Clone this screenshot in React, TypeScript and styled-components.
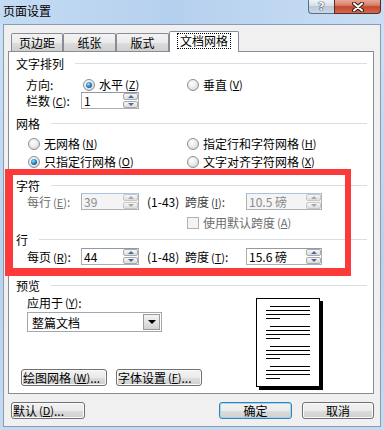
import styled, { createGlobalStyle } from "styled-components";
import { FC, ReactNode } from "react";

const GlobalStyle = createGlobalStyle`
  html, body { margin: 0; padding: 0; }
  body {
    font-family: "Noto Sans CJK SC", "Noto Sans", sans-serif;
    font-size: 12px;
    color: #000;
  }
  u { text-underline-offset: 1px; }
`;

const Window = styled.div`
  position: relative;
  width: 384px;
  height: 430px;
  display: flex;
  flex-direction: column;
  background: linear-gradient(180deg, #cfe2f6 0%, #b9d2ed 60%, #c4daf1 100%);
  overflow: hidden;
`;

const TitleBar = styled.div`
  height: 24px;
  flex-shrink: 0;
  display: flex;
  justify-content: space-between;
  align-items: flex-start;
  background: linear-gradient(90deg, #c4dbf3 0%, #b5d0ee 45%, #c9def4 100%);
`;

const Title = styled.div`
  padding: 4px 0 0 3px;
  line-height: 13px;
`;

const Caption = styled.div`
  display: flex;
  margin-right: 3px;
`;

const HelpButton = styled.div`
  width: 26px;
  height: 14px;
  box-sizing: border-box;
  border: 1px solid #5d6d82;
  border-top: none;
  border-right: none;
  border-radius: 0 0 0 4px;
  background: linear-gradient(180deg, #eef3f9 0%, #d5dfea 45%, #b9c8da 50%, #cbd7e5 100%);
  display: flex;
  align-items: center;
  justify-content: center;
  color: #fff;
  font: bold 11px "DejaVu Sans", sans-serif;
  text-shadow: 0 0 1px #26374d, 0 0 1px #26374d, 0 0 1px #26374d;
`;

const CloseButton = styled.div`
  width: 47px;
  height: 14px;
  box-sizing: border-box;
  border: 1px solid #5a2a22;
  border-top: none;
  border-radius: 0 0 4px 0;
  background: linear-gradient(180deg, #e8a797 0%, #d8806b 40%, #c5472f 52%, #d06a52 100%);
  display: flex;
  align-items: center;
  justify-content: center;
`;

const Client = styled.div`
  flex: 1;
  margin: 0 3px 3px 3px;
  background: #f0f0f0;
  border: 1px solid #8a9bb1;
  display: flex;
  flex-direction: column;
`;

const TabRow = styled.div`
  position: relative;
  z-index: 2;
  display: flex;
  align-items: flex-end;
  height: 20px;
  margin-top: 6px;
  padding-left: 7px;
`;

const Tab = styled.div<{ $w: number; $active?: boolean }>`
  width: ${p => p.$w}px;
  height: ${p => (p.$active ? 21 : 18)}px;
  margin-bottom: ${p => (p.$active ? -1 : 0)}px;
  box-sizing: border-box;
  border: 1px solid #898c95;
  border-bottom: none;
  border-radius: 2px 2px 0 0;
  background: ${p =>
    p.$active ? "#fff" : "linear-gradient(180deg, #f3f3f3 0%, #ebebeb 50%, #dddddd 51%, #cfcfcf 100%)"};
  display: flex;
  align-items: center;
  justify-content: center;
  padding-bottom: ${p => (p.$active ? 2 : 0)}px;
`;

const FocusText = styled.span`
  outline: 1px dotted #000;
  padding: 0 2px;
  line-height: 14px;
`;

const Panel = styled.div`
  position: relative;
  margin-left: 4px;
  width: 366px;
  height: 343px;
  box-sizing: border-box;
  border: 1px solid #898c95;
  background: #fff;
  display: flex;
  flex-direction: column;
  padding-top: 3px;
  overflow: hidden;
`;

const Row = styled.div<{ $mt?: number; $indent?: number }>`
  display: flex;
  align-items: center;
  height: 17px;
  line-height: 17px;
  flex-shrink: 0;
  margin-top: ${p => p.$mt ?? 0}px;
  padding-left: ${p => p.$indent ?? 0}px;
  white-space: nowrap;
`;

const GroupHeader = styled(Row)`
  padding-left: 7px;
  padding-right: 6px;
  gap: 11px;
  &::after {
    content: "";
    flex: 1;
    height: 1px;
    background: #d5dfe5;
  }
`;

const Key = styled.span`
  margin-left: 2px;
  font-size: 11px;
`;

const Label = styled.span<{ $w?: number; $disabled?: boolean; $dim?: boolean }>`
  display: inline-block;
  width: ${p => (p.$w ? `${p.$w}px` : "auto")};
  flex-shrink: 0;
  color: ${p => (p.$disabled ? "#6d6d6d" : p.$dim ? "#3c3c3c" : "#000")};
`;

const Option = styled.span<{ $w?: number; $disabled?: boolean }>`
  display: flex;
  align-items: center;
  width: ${p => (p.$w ? `${p.$w}px` : "auto")};
  flex-shrink: 0;
  color: ${p => (p.$disabled ? "#6d6d6d" : "#000")};
`;

const RadioDot = styled.span<{ $checked?: boolean }>`
  width: 12px;
  height: 12px;
  box-sizing: border-box;
  border-radius: 50%;
  border: 1px solid #8f8f8f;
  background: radial-gradient(circle at 40% 35%, #ffffff 0%, #ececec 45%, #c9c9c9 100%);
  display: inline-flex;
  align-items: center;
  justify-content: center;
  margin-right: 4px;
  &::after {
    content: "";
    display: ${p => (p.$checked ? "block" : "none")};
    width: 6px;
    height: 6px;
    border-radius: 50%;
    background: radial-gradient(circle at 40% 35%, #9fe0ff 0%, #2a86c9 45%, #0b3a6a 100%);
  }
`;

const CheckBox = styled.span`
  width: 12px;
  height: 12px;
  box-sizing: border-box;
  border: 1px solid #b1b1b1;
  background: #f4f4f4;
  margin-right: 4px;
`;

const SpinBox = styled.div<{ $w: number; $disabled?: boolean }>`
  width: ${p => p.$w}px;
  height: 17px;
  box-sizing: border-box;
  border: 1px solid ${p => (p.$disabled ? "#adb2b5" : "#abadb3")};
  border-top-color: ${p => (p.$disabled ? "#a9c3e3" : "#8e9aa8")};
  background: ${p => (p.$disabled ? "#f4f4f4" : "#fff")};
  display: flex;
  flex-shrink: 0;
`;

const SpinText = styled.span<{ $disabled?: boolean }>`
  flex: 1;
  padding-left: 2px;
  line-height: 15px;
  color: ${p => (p.$disabled ? "#8a8a8a" : "#000")};
`;

const SpinButtons = styled.div`
  width: 15px;
  display: flex;
  flex-direction: column;
  gap: 1px;
`;

const SpinHalf = styled.div<{ $down?: boolean; $disabled?: boolean }>`
  flex: 1;
  box-sizing: border-box;
  border: 1px solid ${p => (p.$disabled ? "#c8c8c8" : "#a9a9a9")};
  border-radius: 2px;
  background: linear-gradient(180deg, #f7f7f7, #dcdcdc);
  display: flex;
  align-items: center;
  justify-content: center;
  &::after {
    content: "";
    border-left: 3px solid transparent;
    border-right: 3px solid transparent;
    ${p => (p.$down ? "border-top" : "border-bottom")}: 3px solid ${p => (p.$disabled ? "#a8a8a8" : "#4a6aa3")};
  }
`;

const Range = styled.span`
  width: 38px;
  margin-left: 8px;
  flex-shrink: 0;
`;

const Select = styled.div`
  width: 135px;
  height: 20px;
  box-sizing: border-box;
  margin-left: 6px;
  margin-top: 1px;
  border: 1px solid #a4a7ad;
  background: #fff;
  display: flex;
  align-items: center;
  padding: 0 1px 0 4px;
`;

const SelectText = styled.span`
  flex: 1;
`;

const DropButton = styled.div`
  width: 17px;
  height: 16px;
  box-sizing: border-box;
  border: 1px solid #9a9a9a;
  background: linear-gradient(180deg, #f4f4f4, #d2d2d2);
  display: flex;
  align-items: center;
  justify-content: center;
  &::after {
    content: "";
    border-left: 4px solid transparent;
    border-right: 4px solid transparent;
    border-top: 4px solid #000;
  }
`;

const PreviewBody = styled.div`
  display: flex;
`;

const PreviewLeft = styled.div`
  width: 247px;
  padding-left: 12px;
  box-sizing: border-box;
  display: flex;
  flex-direction: column;
`;

const PageSvg = styled.svg`
  margin-top: 4px;
  flex-shrink: 0;
`;

const ButtonRow = styled.div<{ $mt?: number }>`
  display: flex;
  gap: 9px;
  margin-top: ${p => p.$mt ?? 0}px;
`;

const Button = styled.div<{ $w: number; $default?: boolean; $center?: boolean }>`
  width: ${p => p.$w}px;
  height: 17px;
  box-sizing: border-box;
  border: 1px solid ${p => (p.$default ? "#3c7fb1" : "#707070")};
  border-radius: 3px;
  background: linear-gradient(180deg, #f2f2f2 0%, #ebebeb 50%, #dddddd 51%, #cfcfcf 100%);
  box-shadow: inset 0 0 0 1px ${p => (p.$default ? "#9ad8f5" : "#fbfbfb")};
  display: flex;
  align-items: center;
  justify-content: ${p => (p.$center ? "center" : "flex-start")};
  padding-left: ${p => (p.$center ? 0 : 1)}px;
  line-height: 15px;
  white-space: nowrap;
  flex-shrink: 0;
`;

const Footer = styled.div`
  display: flex;
  padding: 8px 6px 0 7px;
`;

const FooterRight = styled.div`
  display: flex;
  gap: 10px;
  margin-left: auto;
`;

// red annotation box drawn over the dialog
const Highlight = styled.div`
  position: absolute;
  left: 5px;
  top: 169px;
  width: 346px;
  height: 107px;
  box-sizing: border-box;
  border: solid #fc3a3a;
  border-width: 6px 6px 8px 8px;
  pointer-events: none;
`;

const Spinner: FC<{ w: number; value: string; disabled?: boolean }> = ({ w, value, disabled }) => (
  <SpinBox $w={w} $disabled={disabled}>
    <SpinText $disabled={disabled}>{value}</SpinText>
    <SpinButtons>
      <SpinHalf $disabled={disabled} />
      <SpinHalf $down $disabled={disabled} />
    </SpinButtons>
  </SpinBox>
);

const Radio: FC<{ w?: number; checked?: boolean; children: ReactNode }> = ({ w, checked, children }) => (
  <Option $w={w}>
    <RadioDot $checked={checked} />
    {children}
  </Option>
);

const Mn: FC<{ k: string }> = ({ k }) => (
  <Key>
    (<u>{k}</u>)
  </Key>
);

const PreviewPage = () => {
  const paragraphs = [8, 28, 48, 68];
  return (
    <PageSvg width="68" height="93" viewBox="0 0 68 93">
      <rect x="3" y="3" width="64" height="89" fill="#000" />
      <rect x="0.5" y="0.5" width="63" height="88" fill="#fff" stroke="#000" />
      {paragraphs.map(y => (
        <g key={y} fill="#000">
          <rect x="14" y={y} width="40" height="1" />
          <rect x="10" y={y + 4} width="44" height="1" />
          <rect x="10" y={y + 8} width="44" height="1" />
          <rect x="10" y={y + 12} width="14" height="1" />
        </g>
      ))}
    </PageSvg>
  );
};

const App = () => (
  <>
    <GlobalStyle />
    <Window>
      <TitleBar>
        <Title>页面设置</Title>
        <Caption>
          <HelpButton>?</HelpButton>
          <CloseButton>
            <svg width="14" height="10" viewBox="0 0 14 10">
              <path d="M3 1.5 L11 8.5 M11 1.5 L3 8.5" stroke="#3b1810" strokeWidth="4" strokeLinecap="round" />
              <path d="M3 1.5 L11 8.5 M11 1.5 L3 8.5" stroke="#fff" strokeWidth="2" strokeLinecap="round" />
            </svg>
          </CloseButton>
        </Caption>
      </TitleBar>
      <Client>
        <TabRow>
          <Tab $w={52}>页边距</Tab>
          <Tab $w={53}>纸张</Tab>
          <Tab $w={53}>版式</Tab>
          <Tab $w={70} $active>
            <FocusText>文档网格</FocusText>
          </Tab>
        </TabRow>
        <Panel>
          <GroupHeader>文字排列</GroupHeader>
          <Row $mt={4} $indent={17}>
            <Label $w={57}>方向:</Label>
            <Radio w={104} checked>
              水平<Mn k="Z" />
            </Radio>
            <Radio>
              垂直<Mn k="V" />
            </Radio>
          </Row>
          <Row $mt={-1} $indent={17}>
            <Label $w={55}>
              栏数<Mn k="C" />:
            </Label>
            <Spinner w={58} value="1" />
          </Row>
          <GroupHeader $mt={6}>网格</GroupHeader>
          <Row $mt={3} $indent={19}>
            <Radio w={159}>
              无网格<Mn k="N" />
            </Radio>
            <Radio>
              指定行和字符网格<Mn k="H" />
            </Radio>
          </Row>
          <Row $mt={1} $indent={19}>
            <Radio w={159} checked>
              只指定行网格<Mn k="O" />
            </Radio>
            <Radio>
              文字对齐字符网格<Mn k="X" />
            </Radio>
          </Row>
          <GroupHeader $mt={7}>字符</GroupHeader>
          <Row $mt={-1} $indent={18}>
            <Label $w={54} $disabled>
              每行<Mn k="E" />:
            </Label>
            <Spinner w={58} value="39" disabled />
            <Range>(1-43)</Range>
            <Label $w={61} $dim>
              跨度<Mn k="I" />:
            </Label>
            <Spinner w={76} value="10.5 磅" disabled />
          </Row>
          <Row $mt={4} $indent={178}>
            <Option $disabled>
              <CheckBox />
              使用默认跨度<Mn k="A" />
            </Option>
          </Row>
          <GroupHeader>行</GroupHeader>
          <Row $indent={18}>
            <Label $w={54}>
              每页<Mn k="R" />:
            </Label>
            <Spinner w={58} value="44" />
            <Range>(1-48)</Range>
            <Label $w={61}>
              跨度<Mn k="T" />:
            </Label>
            <Spinner w={76} value="15.6 磅" />
          </Row>
          <GroupHeader $mt={12}>预览</GroupHeader>
          <PreviewBody>
            <PreviewLeft>
              <Row $indent={6}>
                应用于<Mn k="Y" />:
              </Row>
              <Select>
                <SelectText>整篇文档</SelectText>
                <DropButton />
              </Select>
              <ButtonRow $mt={37}>
                <Button $w={86}>
                  绘图网格<Mn k="W" />...
                </Button>
                <Button $w={86}>
                  字体设置<Mn k="F" />...
                </Button>
              </ButtonRow>
            </PreviewLeft>
            <PreviewPage />
          </PreviewBody>
        </Panel>
        <Footer>
          <Button $w={74}>
            默认<Mn k="D" />...
          </Button>
          <FooterRight>
            <Button $w={73} $default $center>
              确定
            </Button>
            <Button $w={72} $center>
              取消
            </Button>
          </FooterRight>
        </Footer>
      </Client>
      <Highlight />
    </Window>
  </>
);

export default App;
